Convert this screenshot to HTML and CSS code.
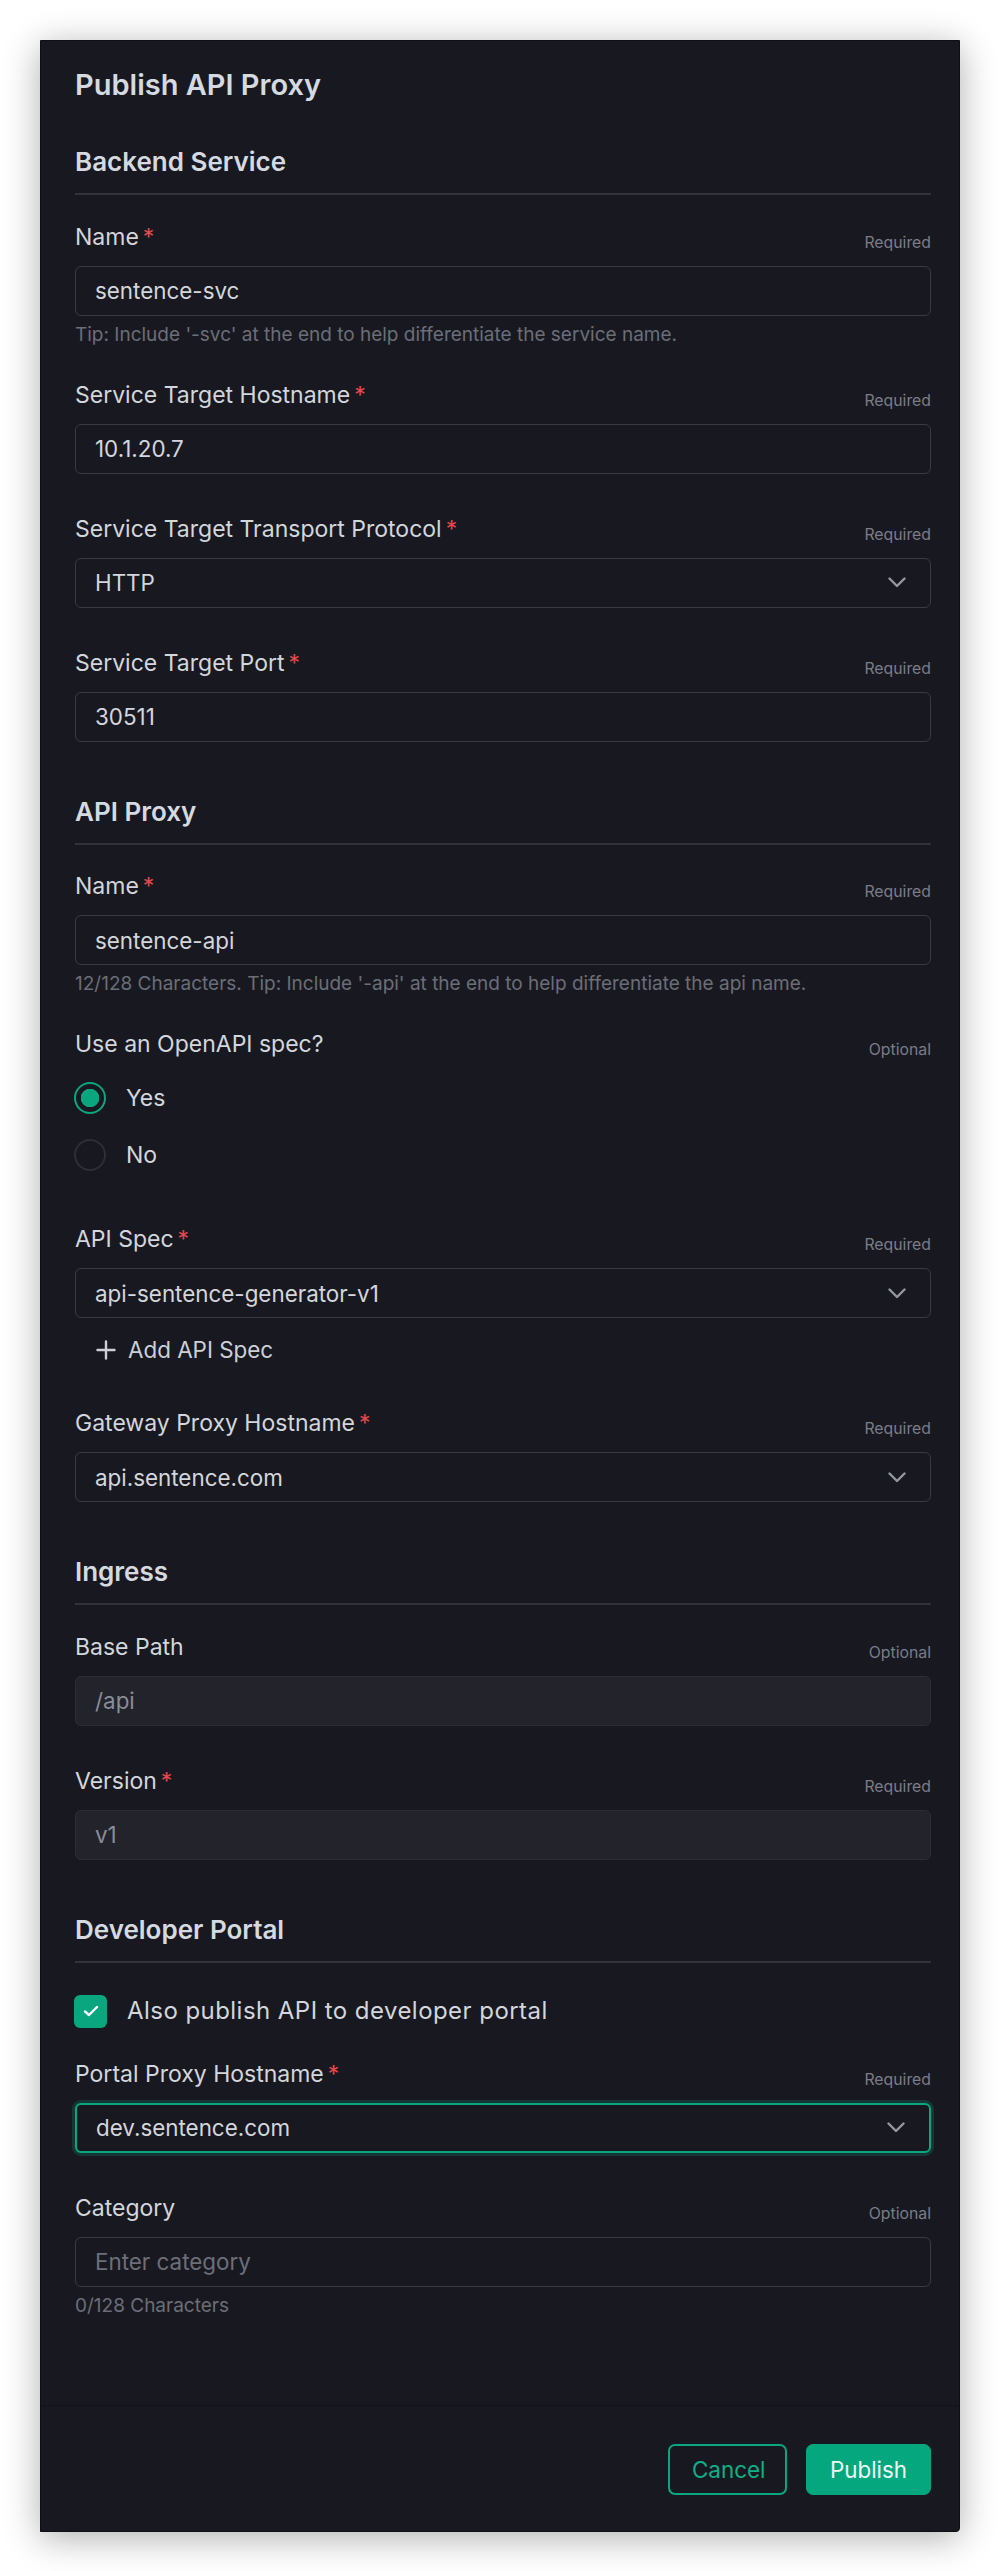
FILE: index.html
```html
<!DOCTYPE html>
<html lang="en">
<head>
<meta charset="utf-8">
<title>Publish API Proxy</title>
<link rel="stylesheet" href="styles.css">
</head>
<body>
<div class="modal">
  <div class="modal-body">
    <h1 class="title">Publish API Proxy</h1>

    <section class="section first">
      <h2 class="section-title">Backend Service</h2>
      <div class="fields">
        <div class="field has-help">
          <div class="field-head"><span class="label">Name<span class="req">*</span></span><span class="hint">Required</span></div>
          <div class="control"><span class="value">sentence-svc</span></div>
          <p class="help">Tip: Include '-svc' at the end to help differentiate the service name.</p>
        </div>
        <div class="field">
          <div class="field-head"><span class="label">Service Target Hostname<span class="req">*</span></span><span class="hint">Required</span></div>
          <div class="control"><span class="value">10.1.20.7</span></div>
        </div>
        <div class="field">
          <div class="field-head"><span class="label">Service Target Transport Protocol<span class="req">*</span></span><span class="hint">Required</span></div>
          <div class="control select"><span class="value">HTTP</span>
            <svg class="chevron" width="18" height="11" viewBox="0 0 18 11"><polyline points="1.5,1.5 9,9 16.5,1.5" fill="none" stroke="currentColor" stroke-width="2.4" stroke-linecap="round" stroke-linejoin="round"/></svg>
          </div>
        </div>
        <div class="field">
          <div class="field-head"><span class="label">Service Target Port<span class="req">*</span></span><span class="hint">Required</span></div>
          <div class="control"><span class="value">30511</span></div>
        </div>
      </div>
    </section>

    <section class="section">
      <h2 class="section-title">API Proxy</h2>
      <div class="fields">
        <div class="field has-help">
          <div class="field-head"><span class="label">Name<span class="req">*</span></span><span class="hint">Required</span></div>
          <div class="control"><span class="value">sentence-api</span></div>
          <p class="help">12/128 Characters. Tip: Include '-api' at the end to help differentiate the api name.</p>
        </div>
        <div class="field radio-field">
          <div class="field-head"><span class="label">Use an OpenAPI spec?</span><span class="hint">Optional</span></div>
          <div class="radios">
            <div class="radio-row"><span class="radio checked"></span><span class="option">Yes</span></div>
            <div class="radio-row"><span class="radio"></span><span class="option">No</span></div>
          </div>
        </div>
        <div class="field add-field">
          <div class="field-head"><span class="label">API Spec<span class="req">*</span></span><span class="hint">Required</span></div>
          <div class="control select"><span class="value">api-sentence-generator-v1</span>
            <svg class="chevron" width="18" height="11" viewBox="0 0 18 11"><polyline points="1.5,1.5 9,9 16.5,1.5" fill="none" stroke="currentColor" stroke-width="2.4" stroke-linecap="round" stroke-linejoin="round"/></svg>
          </div>
          <div class="add-link">
            <svg class="plus" width="20" height="20" viewBox="0 0 20 20"><path d="M10 1.5v17M1.5 10h17" fill="none" stroke="currentColor" stroke-width="2.4" stroke-linecap="round"/></svg>
            <span>Add API Spec</span>
          </div>
        </div>
        <div class="field">
          <div class="field-head"><span class="label">Gateway Proxy Hostname<span class="req">*</span></span><span class="hint">Required</span></div>
          <div class="control select"><span class="value">api.sentence.com</span>
            <svg class="chevron" width="18" height="11" viewBox="0 0 18 11"><polyline points="1.5,1.5 9,9 16.5,1.5" fill="none" stroke="currentColor" stroke-width="2.4" stroke-linecap="round" stroke-linejoin="round"/></svg>
          </div>
        </div>
      </div>
    </section>

    <section class="section">
      <h2 class="section-title">Ingress</h2>
      <div class="fields">
        <div class="field">
          <div class="field-head"><span class="label">Base Path</span><span class="hint">Optional</span></div>
          <div class="control disabled"><span class="value">/api</span></div>
        </div>
        <div class="field">
          <div class="field-head"><span class="label">Version<span class="req">*</span></span><span class="hint">Required</span></div>
          <div class="control disabled"><span class="value">v1</span></div>
        </div>
      </div>
    </section>

    <section class="section">
      <h2 class="section-title">Developer Portal</h2>
      <div class="fields">
        <div class="check-row">
          <span class="checkbox"><svg width="16" height="12" viewBox="0 0 16 12"><polyline points="2,6.5 6,10 14,2" fill="none" stroke="#ffffff" stroke-width="2.4" stroke-linecap="round" stroke-linejoin="round"/></svg></span>
          <span class="option check-label">Also publish API to developer portal</span>
        </div>
        <div class="field">
          <div class="field-head"><span class="label">Portal Proxy Hostname<span class="req">*</span></span><span class="hint">Required</span></div>
          <div class="control select focused"><span class="value">dev.sentence.com</span>
            <svg class="chevron" width="18" height="11" viewBox="0 0 18 11"><polyline points="1.5,1.5 9,9 16.5,1.5" fill="none" stroke="currentColor" stroke-width="2.4" stroke-linecap="round" stroke-linejoin="round"/></svg>
          </div>
        </div>
        <div class="field has-help">
          <div class="field-head"><span class="label">Category</span><span class="hint">Optional</span></div>
          <div class="control"><span class="placeholder">Enter category</span></div>
          <p class="help">0/128 Characters</p>
        </div>
      </div>
    </section>
  </div>

  <div class="modal-footer">
    <button class="btn btn-outline" type="button">Cancel</button>
    <button class="btn btn-primary" type="button">Publish</button>
  </div>
</div>
</body>
</html>
```

FILE: styles.css
```css
* { box-sizing: border-box; }

html, body {
  margin: 0;
  padding: 0;
  background: #ffffff;
}

body {
  padding: 40px;
  font-family: Inter, "Noto Sans", "Liberation Sans", sans-serif;
  color: #d3d6dc;
}

.modal {
  width: 920px;
  background: #181920;
  border: 1px solid #0e0f13;
  box-shadow: 0 6px 36px rgba(0, 0, 0, 0.32);
  border-radius: 0 0 4px 0;
}

.modal-body {
  padding: 24px 28px 87px 34px;
}

.title {
  margin: 0;
  font-size: 29px;
  line-height: 40px;
  font-weight: 600;
  color: #d5d9e0;
}

.section { margin-top: 53px; }
.section.first { margin-top: 40px; }

.section-title {
  margin: 0;
  font-size: 26px;
  line-height: 34px;
  font-weight: 600;
  color: #d5d9e0;
  padding-bottom: 14px;
  border-bottom: 2px solid #31323b;
}

.fields {
  padding-top: 25.5px;
  display: flex;
  flex-direction: column;
}

.field + .field { margin-top: 39px; }
.field.has-help + .field { margin-top: 32px; }
.field.radio-field + .field { margin-top: 52px; }
.field.add-field + .field { margin-top: 41px; }

.field-head {
  display: flex;
  justify-content: space-between;
  align-items: flex-end;
  height: 32px;
}

.label {
  font-size: 23px;
  line-height: 32px;
  color: #d3d6dc;
}

.req {
  color: #e5484d;
  margin-left: 4px;
}

.hint {
  font-size: 15.8px;
  line-height: 20px;
  color: #7a7d87;
}

.control {
  margin-top: 13px;
  height: 50px;
  border: 1.5px solid #393a44;
  border-radius: 6px;
  background: #181920;
  display: flex;
  align-items: center;
  justify-content: space-between;
  padding: 0 24px 0 19px;
  font-size: 22.4px;
  color: #d3d6dc;
}

.control.disabled {
  background: #22232b;
  border-color: #2c2d36;
  color: #8a8d96;
}

.control.focused {
  border: 2px solid #0aa67f;
  box-shadow: 0 0 0 3px rgba(10, 166, 127, 0.22);
}

.placeholder { color: #6c6f79; }

.chevron { color: #9598a1; flex: none; }

.help {
  margin: 7px 0 0;
  font-size: 19px;
  line-height: 24px;
  color: #6b6e78;
}

.radios {
  margin-top: 22px;
  display: flex;
  flex-direction: column;
  gap: 25px;
}

.radio-row, .check-row {
  display: flex;
  align-items: center;
  gap: 20px;
  height: 32px;
}

.radio {
  width: 32px;
  height: 32px;
  border-radius: 50%;
  border: 2px solid #2d2e37;
  flex: none;
  margin-left: -1px;
}

.radio.checked {
  border: 2.5px solid #0aa67f;
  background: radial-gradient(circle, #0aa67f 0 9px, transparent 9.5px);
}

.option {
  font-size: 23px;
  line-height: 32px;
  color: #d3d6dc;
}

.check-label {
  font-size: 24px;
  letter-spacing: 0.45px;
}

.check-row { margin-top: 7px; margin-bottom: 30.5px; }

.checkbox {
  width: 33px;
  height: 33px;
  border-radius: 6px;
  background: #0aa67f;
  display: flex;
  align-items: center;
  justify-content: center;
  flex: none;
  margin-left: -1px;
}

.add-link {
  margin-top: 16px;
  padding-left: 21px;
  display: flex;
  align-items: center;
  gap: 12px;
  font-size: 22.4px;
  line-height: 32px;
  color: #cdd0d7;
}

.plus { color: #cdd0d7; flex: none; }

.modal-footer {
  border-top: 1px solid #121318;
  padding: 38px 28px 36px;
  display: flex;
  justify-content: flex-end;
  gap: 19px;
}

.btn {
  height: 51px;
  border-radius: 7px;
  font-family: Inter, "Noto Sans", "Liberation Sans", sans-serif;
  font-size: 22.4px;
  font-weight: 400;
  padding: 0 22px;
  cursor: pointer;
}

.btn-outline {
  width: 119px;
  background: transparent;
  border: 2px solid #0aa67f;
  color: #0fae87;
}

.btn-primary {
  width: 125px;
  background: #05a77f;
  border: 1px solid #05a77f;
  color: #eef7f4;
}
```
